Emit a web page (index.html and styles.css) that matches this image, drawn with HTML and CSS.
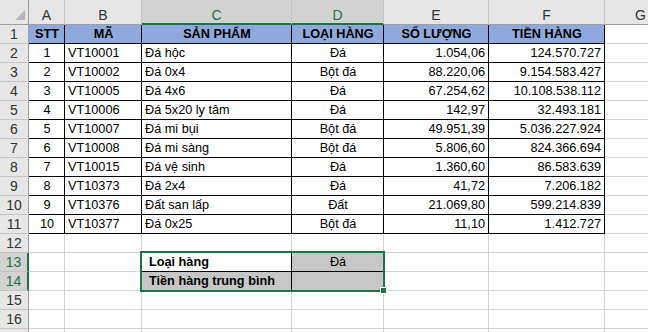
FILE: index.html
```html
<!DOCTYPE html>
<html lang="vi">
<head>
<meta charset="utf-8">
<title>Bảng hàng hóa</title>
<link rel="stylesheet" href="styles.css">
</head>
<body>
<div class="sheet">
  <div class="corner"><svg class="tri" width="12" height="12" viewBox="0 0 12 12"><polygon points="11,1 11,11 1,11" fill="#b7b7b7"/></svg></div>
  <div class="ch">A</div><div class="ch">B</div><div class="ch hl">C</div><div class="ch hl">D</div><div class="ch">E</div><div class="ch">F</div><div class="ch">G</div>

  <div class="rh">1</div><div class="c t hd">STT</div><div class="c t hd">MÃ</div><div class="c t hd">SẢN PHẨM</div><div class="c t hd">LOẠI HÀNG</div><div class="c t hd">SỐ LƯỢNG</div><div class="c t hd">TIỀN HÀNG</div><div class="c"></div>
  <div class="rh">2</div><div class="c t ctr">1</div><div class="c t">VT10001</div><div class="c t">Đá hộc</div><div class="c t ctr">Đá</div><div class="c t num">1.054,06</div><div class="c t num">124.570.727</div><div class="c"></div>
  <div class="rh">3</div><div class="c t ctr">2</div><div class="c t">VT10002</div><div class="c t">Đá 0x4</div><div class="c t ctr">Bột đá</div><div class="c t num">88.220,06</div><div class="c t num">9.154.583.427</div><div class="c"></div>
  <div class="rh">4</div><div class="c t ctr">3</div><div class="c t">VT10005</div><div class="c t">Đá 4x6</div><div class="c t ctr">Đá</div><div class="c t num">67.254,62</div><div class="c t num">10.108.538.112</div><div class="c"></div>
  <div class="rh">5</div><div class="c t ctr">4</div><div class="c t">VT10006</div><div class="c t">Đá 5x20 ly tâm</div><div class="c t ctr">Đá</div><div class="c t num">142,97</div><div class="c t num">32.493.181</div><div class="c"></div>
  <div class="rh">6</div><div class="c t ctr">5</div><div class="c t">VT10007</div><div class="c t">Đá mi bụi</div><div class="c t ctr">Bột đá</div><div class="c t num">49.951,39</div><div class="c t num">5.036.227.924</div><div class="c"></div>
  <div class="rh">7</div><div class="c t ctr">6</div><div class="c t">VT10008</div><div class="c t">Đá mi sàng</div><div class="c t ctr">Bột đá</div><div class="c t num">5.806,60</div><div class="c t num">824.366.694</div><div class="c"></div>
  <div class="rh">8</div><div class="c t ctr">7</div><div class="c t">VT10015</div><div class="c t">Đá vệ sinh</div><div class="c t ctr">Đá</div><div class="c t num">1.360,60</div><div class="c t num">86.583.639</div><div class="c"></div>
  <div class="rh">9</div><div class="c t ctr">8</div><div class="c t">VT10373</div><div class="c t">Đá 2x4</div><div class="c t ctr">Đá</div><div class="c t num">41,72</div><div class="c t num">7.206.182</div><div class="c"></div>
  <div class="rh">10</div><div class="c t ctr">9</div><div class="c t">VT10376</div><div class="c t">Đất san lấp</div><div class="c t ctr">Đất</div><div class="c t num">21.069,80</div><div class="c t num">599.214.839</div><div class="c"></div>
  <div class="rh">11</div><div class="c t ctr">10</div><div class="c t">VT10377</div><div class="c t">Đá 0x25</div><div class="c t ctr">Bột đá</div><div class="c t num">11,10</div><div class="c t num">1.412.727</div><div class="c"></div>

  <div class="rh">12</div><div class="c"></div><div class="c"></div><div class="c"></div><div class="c"></div><div class="c"></div><div class="c"></div><div class="c"></div>
  <div class="rh rhl">13</div><div class="c"></div><div class="c"></div><div class="c t lbl">Loại hàng</div><div class="c bb sel ctr">Đá</div><div class="c"></div><div class="c"></div><div class="c"></div>
  <div class="rh rhl">14</div><div class="c"></div><div class="c"></div><div class="c t lbl sel">Tiền hàng trung bình</div><div class="c sel"></div><div class="c"></div><div class="c"></div><div class="c"></div>
  <div class="rh">15</div><div class="c"></div><div class="c"></div><div class="c"></div><div class="c"></div><div class="c"></div><div class="c"></div><div class="c"></div>
  <div class="rh">16</div><div class="c"></div><div class="c"></div><div class="c"></div><div class="c"></div><div class="c"></div><div class="c"></div><div class="c"></div>
  <div class="rh"></div><div class="c"></div><div class="c"></div><div class="c"></div><div class="c"></div><div class="c"></div><div class="c"></div><div class="c"></div>

  <div class="selbox"></div>
  <div class="handle"></div>
</div>
</body>
</html>
```

FILE: styles.css
```css
html, body {
  margin: 0;
  padding: 0;
  background: #ffffff;
  overflow: hidden;
}

.sheet {
  position: relative;
  display: grid;
  grid-template-columns: 29px 36px 77px 150px 92px 105px 116px 72px;
  grid-template-rows: 25px;
  grid-auto-rows: 19px;
  font-family: "Liberation Sans", Arial, sans-serif;
  color: #000;
}

.sheet > div {
  box-sizing: border-box;
}

.corner {
  position: relative;
  background: #e6e6e6;
  border-right: 1px solid #9f9f9f;
  border-bottom: 1px solid #9f9f9f;
}

.tri {
  position: absolute;
  right: 2px;
  bottom: 3px;
}

.ch {
  background: #e6e6e6;
  border-right: 1px solid #c4c4c4;
  border-bottom: 1px solid #9f9f9f;
  text-align: center;
  font-size: 14px;
  line-height: 17px;
  padding-top: 7px;
  color: #333;
}

.ch.hl {
  background: #d2d2d2;
  color: #217346;
  border-bottom: 2px solid #217346;
}

.rh {
  background: #e6e6e6;
  border-right: 1px solid #9f9f9f;
  border-bottom: 1px solid #c4c4c4;
  text-align: center;
  font-size: 14px;
  line-height: 17px;
  padding-top: 1px;
  color: #333;
}

.rh.rhl {
  background: #d2d2d2;
  color: #217346;
  border-right: 2px solid #217346;
}

.c {
  border-right: 1px solid #d4d4d4;
  border-bottom: 1px solid #d4d4d4;
  font-size: 12.7px;
  line-height: 17px;
  padding: 1px 2px 0 3px;
  white-space: nowrap;
  overflow: visible;
}

.t {
  border-right-color: #000;
  border-bottom-color: #000;
}

.bb {
  border-bottom-color: #000;
}

.hd {
  background: #8ea9db;
  font-weight: bold;
  text-align: center;
}

.ctr {
  text-align: center;
}

.num {
  text-align: right;
  padding-right: 3px;
}

.lbl {
  font-weight: bold;
  padding-left: 7px;
}

.sel {
  background: #c6c6c6;
}

.selbox {
  position: absolute;
  left: 140px;
  top: 251px;
  width: 245px;
  height: 41px;
  box-sizing: border-box;
  border: 2px solid #217346;
  pointer-events: none;
}

.handle {
  position: absolute;
  left: 380px;
  top: 287px;
  width: 7px;
  height: 7px;
  box-sizing: border-box;
  background: #217346;
  border: 1px solid #ffffff;
}
```
